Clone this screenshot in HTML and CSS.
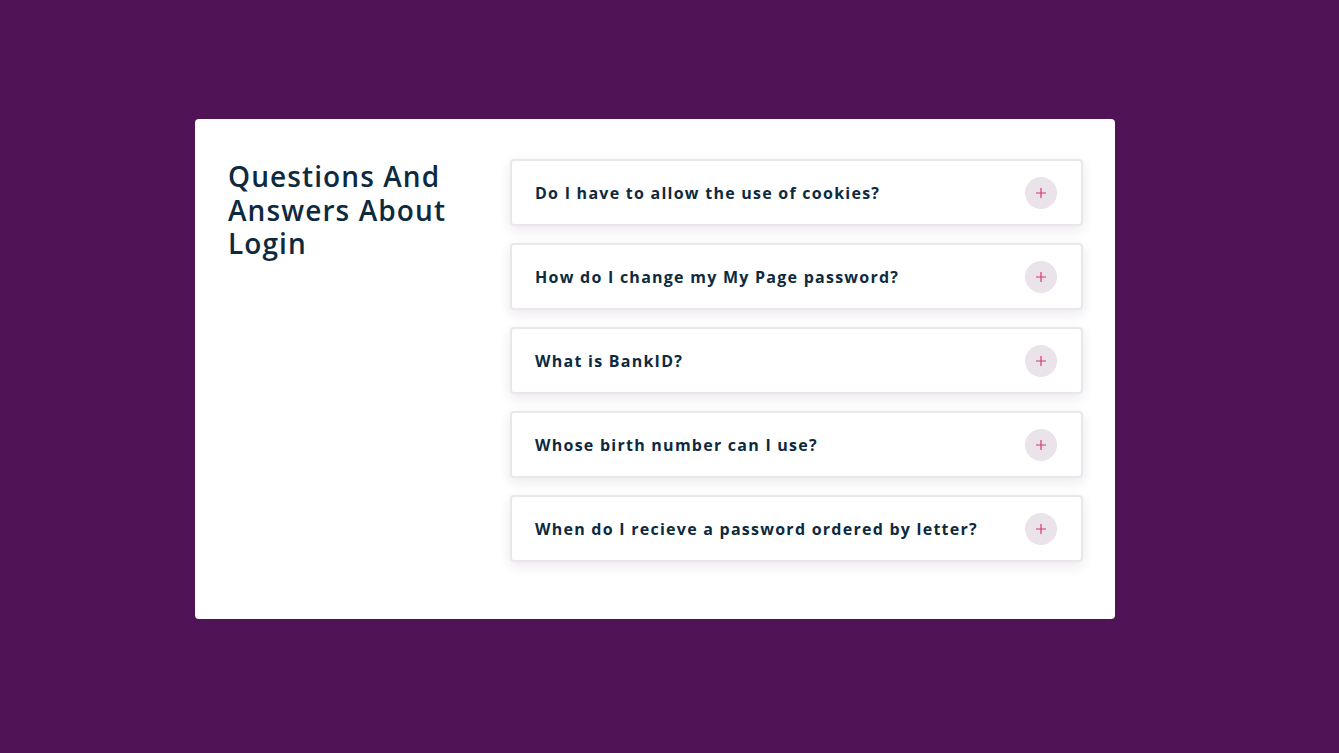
FILE: index.html
```html
<!DOCTYPE html>
<html lang="en">
<head>
<meta charset="utf-8">
<title>FAQ</title>
<link rel="stylesheet" href="styles.css">
</head>
<body>
<main class="page">
  <section class="card">
    <div class="intro">
      <h1 class="title">Questions And Answers About Login</h1>
    </div>
    <div class="faq">
      <div class="item"><span class="q">Do I have to allow the use of cookies?</span><span class="toggle"><svg viewBox="0 0 12 12" width="12" height="12"><path d="M6 1v10M1 6h10" stroke="#d23a6e" stroke-width="1.2"/></svg></span></div>
      <div class="item"><span class="q">How do I change my My Page password?</span><span class="toggle"><svg viewBox="0 0 12 12" width="12" height="12"><path d="M6 1v10M1 6h10" stroke="#d23a6e" stroke-width="1.2"/></svg></span></div>
      <div class="item"><span class="q">What is BankID?</span><span class="toggle"><svg viewBox="0 0 12 12" width="12" height="12"><path d="M6 1v10M1 6h10" stroke="#d23a6e" stroke-width="1.2"/></svg></span></div>
      <div class="item"><span class="q">Whose birth number can I use?</span><span class="toggle"><svg viewBox="0 0 12 12" width="12" height="12"><path d="M6 1v10M1 6h10" stroke="#d23a6e" stroke-width="1.2"/></svg></span></div>
      <div class="item"><span class="q">When do I recieve a password ordered by letter?</span><span class="toggle"><svg viewBox="0 0 12 12" width="12" height="12"><path d="M6 1v10M1 6h10" stroke="#d23a6e" stroke-width="1.2"/></svg></span></div>
    </div>
  </section>
</main>
</body>
</html>
```
FILE: styles.css
```css
html, body {
  margin: 0;
  padding: 0;
}
body {
  background: #4f1356;
  font-family: "Open Sans", "DejaVu Sans", sans-serif;
  color: #0d2a3f;
}
.page {
  min-height: 753px;
  display: flex;
  justify-content: flex-start;
  padding: 119px 0 0 195px;
  box-sizing: border-box;
}
.card {
  width: 920px;
  height: 500px;
  box-sizing: border-box;
  background: #fff;
  border-radius: 4px;
  padding: 40px 32px 0 33px;
  display: flex;
}
.intro {
  width: 282px;
  flex: none;
}
.title {
  margin: 0;
  padding-top: 1px;
  width: 240px;
  font-size: 28px;
  line-height: 33.5px;
  font-weight: 600;
  letter-spacing: 1.1px;
  color: #0d2a3f;
}
.faq {
  flex: 1;
  display: flex;
  flex-direction: column;
  gap: 17px;
}
.item {
  height: 67px;
  box-sizing: border-box;
  border: 2px solid #ebe6ec;
  border-radius: 4px;
  background: #fff;
  box-shadow: 0 4px 12px rgba(60, 30, 70, 0.1);
  display: flex;
  align-items: center;
  justify-content: space-between;
  padding: 0 24px 0 23px;
}
.q {
  font-size: 16px;
  font-weight: 700;
  letter-spacing: 1.25px;
  color: #0d2a3f;
}
.toggle {
  width: 32px;
  height: 32px;
  border-radius: 50%;
  background: #eae3ea;
  display: flex;
  align-items: center;
  justify-content: center;
}
.toggle svg {
  display: block;
}
```
